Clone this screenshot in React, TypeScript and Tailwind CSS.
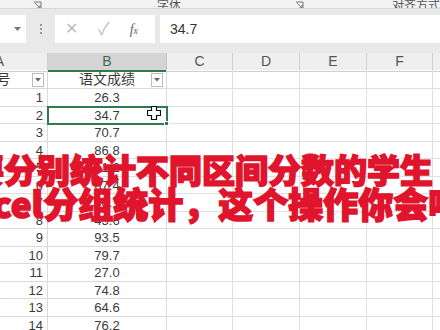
import React from "react";

const rows: [string, string][] = [
  ["1", "26.3"],
  ["2", "34.7"],
  ["3", "70.7"],
  ["4", "86.8"],
  ["5", "51.2"],
  ["6", "67.4"],
  ["7", "58.1"],
  ["8", "45.6"],
  ["9", "93.5"],
  ["10", "79.7"],
  ["11", "27.0"],
  ["12", "74.8"],
  ["13", "64.6"],
  ["14", "76.2"],
  ["15", "88.3"],
];

const cols = ["A", "B", "C", "D", "E", "F", "G"];

function FilterButton() {
  return (
    <div className="absolute right-[3px] top-[3px] w-[12px] h-[14px] border border-[#bdbdbd] bg-white flex items-center justify-center">
      <svg width="6" height="4" viewBox="0 0 6 4">
        <path d="M0 0 L6 0 L3 3.5 Z" fill="#666" />
      </svg>
    </div>
  );
}

function Launcher() {
  return (
    <svg width="9" height="9" viewBox="0 0 9 9" className="text-[#777]">
      <path d="M1 1 H8 V8" fill="none" stroke="currentColor" strokeWidth="1" />
      <path d="M2 2 L7 7 M4 7 H7 V4" fill="none" stroke="currentColor" strokeWidth="1" />
    </svg>
  );
}

export default function App() {
  return (
    <div className="relative w-[440px] h-[330px] overflow-hidden bg-white font-['Liberation_Sans','Noto_Sans_CJK_SC',sans-serif] text-[#3a3a3a]">
      {/* ribbon group labels, only their lower half shows */}
      <div className="relative h-[9px] bg-[#f3f3f3] border-b border-[#d6d6d6] overflow-hidden text-[12px] text-[#555]">
        <div className="flex items-end h-[9px]">
          <div className="ml-[33px] -mb-[1px]">
            <Launcher />
          </div>
          <span className="ml-[115px] leading-none -mb-[3px]">字体</span>
          <div className="ml-[114px] -mb-[1px]">
            <Launcher />
          </div>
          <span className="ml-[88px] leading-none -mb-[3px]">对齐方式</span>
        </div>
      </div>

      {/* formula bar */}
      <div className="h-[44px] bg-[#e9e9e9] flex items-start pt-[6px]">
        <div className="w-[26px] h-[28px] bg-white flex items-center justify-end pr-[5px]">
          <svg width="7" height="4" viewBox="0 0 7 4">
            <path d="M0 0 L7 0 L3.5 4 Z" fill="#777" />
          </svg>
        </div>
        <div className="w-[29px] h-[28px] flex flex-col items-center justify-center gap-[2px]">
          <span className="w-[2px] h-[2px] bg-[#999]" />
          <span className="w-[2px] h-[2px] bg-[#999]" />
          <span className="w-[2px] h-[2px] bg-[#999]" />
        </div>
        <div className="w-[100px] h-[28px] bg-white flex items-center text-[#bdbdbd]">
          <span className="ml-[10px] text-[16px] leading-none">✕</span>
          <span className="ml-[20px] text-[17px] leading-none">✓</span>
          <span className="ml-[20px] font-['Liberation_Serif',serif] italic text-[#666] text-[14px]">
            f<span className="text-[10px]">x</span>
          </span>
        </div>
        <div className="ml-[5px] flex-1 h-[28px] bg-white flex items-center pl-[10px] text-[14px] text-[#333]">
          34.7
        </div>
      </div>

      {/* sheet */}
      <div className="-ml-[48px]">
        <div className="grid grid-cols-[96px_119px_66px_67px_67px_66px_67px] h-[17px] bg-[#efefef] text-[14px] leading-[17px] text-[#555]">
          {cols.map((c) => (
            <div
              key={c}
              className={
                c === "B"
                  ? "text-center bg-[#d4d4d4] border-r border-[#c4c4c4] border-b-2 border-b-[#2f7a4f] text-[#3d6b4f]"
                  : "text-center border-r border-b border-[#cfcfcf]"
              }
            >
              {c}
            </div>
          ))}
        </div>

        <div className="grid grid-cols-[96px_119px_66px_67px_67px_66px_67px] text-[13px]">
          <div className="relative h-[19px] border-r border-b border-[#dadada] flex items-center justify-center pr-[6px] text-[14px]">
            序号
            <FilterButton />
          </div>
          <div className="relative h-[19px] border-r border-b border-[#dadada] flex items-center justify-center text-[14px]">
            语文成绩
            <FilterButton />
          </div>
          {cols.slice(2).map((c) => (
            <div key={c} className="h-[19px] border-r border-b border-[#e0e0e0]" />
          ))}

          {rows.map(([n, v]) => (
            <React.Fragment key={n}>
              <div className="h-[17.5px] border-r border-b border-[#dadada] text-right pr-[4px] leading-[17px]">
                {n}
              </div>
              <div
                className={
                  n === "2"
                    ? "relative h-[17.5px] border-r border-b border-[#dadada] text-center leading-[17px] outline-2 outline-[#2f7a4f] -outline-offset-1"
                    : "h-[17.5px] border-r border-b border-[#dadada] text-center leading-[17px]"
                }
              >
                {v}
                {n === "2" && (
                  <>
                    <span className="absolute -right-[3px] -bottom-[3px] w-[5px] h-[5px] bg-[#2f7a4f] border border-white" />
                    <svg
                      className="absolute left-[99px] top-[-1px]"
                      width="14"
                      height="14"
                      viewBox="0 0 14 14"
                    >
                      <path
                        d="M4.5 0.5 H9.5 V4.5 H13.5 V9.5 H9.5 V13.5 H4.5 V9.5 H0.5 V4.5 H4.5 Z"
                        fill="#fff"
                        stroke="#111"
                        strokeWidth="1.2"
                      />
                    </svg>
                  </>
                )}
              </div>
              {cols.slice(2).map((c) => (
                <div key={c} className="h-[17.5px] border-r border-b border-[#e0e0e0]" />
              ))}
            </React.Fragment>
          ))}
        </div>
      </div>

      {/* red caption over the sheet */}
      <div className="absolute inset-x-0 top-[153px] font-['Noto_Sans_CJK_SC',sans-serif] font-black text-[#e0142c] leading-none whitespace-nowrap [-webkit-text-stroke:1.6px_#e0142c]">
        <div className="-ml-[29px] text-[33px]">要分别统计不同区间分数的学生</div>
        <div className="flex -ml-[47px] -mt-[1px] text-[35px]">
          <span className="w-[100px] text-right">Excel</span>
          <span>分组统计，这个操作你会吗</span>
        </div>
      </div>
    </div>
  );
}
